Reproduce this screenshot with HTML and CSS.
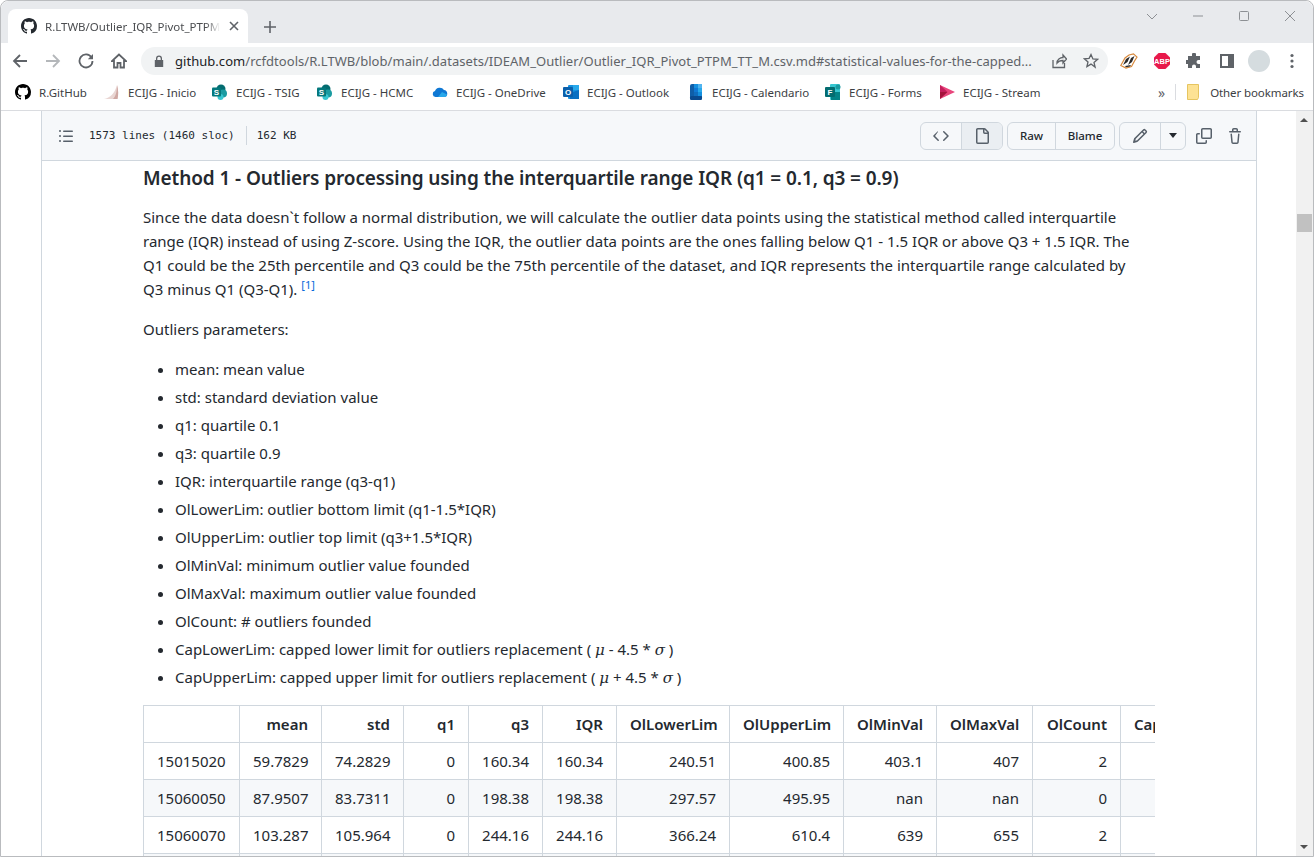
FILE: index.html
```html
<!DOCTYPE html>
<html>
<head>
<meta charset="UTF-8">
<title>R.LTWB/Outlier_IQR_Pivot_PTPM_TT_M.csv.md</title>
<link rel="stylesheet" href="styles.css">
</head>
<body>
<svg class="defs" width="0" height="0">
	<symbol id="gh" viewBox="0 0 16 16"><path d="M8 0C3.58 0 0 3.58 0 8c0 3.54 2.29 6.53 5.47 7.59.4.07.55-.17.55-.38 0-.19-.01-.82-.01-1.49-2.01.37-2.53-.49-2.69-.94-.09-.23-.48-.94-.82-1.13-.28-.15-.68-.52-.01-.53.63-.01 1.08.58 1.23.82.72 1.21 1.87.87 2.33.66.07-.52.28-.87.51-1.07-1.78-.2-3.64-.89-3.64-3.95 0-.87.31-1.59.82-2.15-.08-.2-.36-1.02.08-2.12 0 0 .67-.21 2.2.82.64-.18 1.32-.27 2-.27.68 0 1.36.09 2 .27 1.53-1.04 2.2-.82 2.2-.82.44 1.1.16 1.92.08 2.12.51.56.82 1.27.82 2.15 0 3.07-1.87 3.75-3.65 3.95.29.25.54.73.54 1.48 0 1.07-.01 1.93-.01 2.2 0 .21.15.46.55.38A8.013 8.013 0 0016 8c0-4.42-3.58-8-8-8z"/></symbol>
	<symbol id="sp" viewBox="0 0 16 16"><circle cx="9" cy="5" r="4.5" fill="#036c70"/><circle cx="11" cy="9.5" r="4" fill="#1a9ba1"/><circle cx="8.5" cy="13" r="3" fill="#37c6d0"/><rect x="0" y="3.5" width="9" height="9" rx="1" fill="#03787c"/><text x="4.5" y="10.8" class="fav-letter">S</text></symbol>
</svg>

<!-- окно браузера -->
<div class="tabstrip">
	<div class="tab">
		<svg class="tab-icon" width="16" height="16"><use href="#gh"/></svg>
		<span class="tab-title">R.LTWB/Outlier_IQR_Pivot_PTPM_TT_M.csv.md</span>
		<svg class="tab-close" width="10" height="10" viewBox="0 0 10 10"><path d="M1 1l8 8M9 1l-8 8"/></svg>
	</div>
	<svg class="new-tab" width="12" height="12" viewBox="0 0 12 12"><path d="M6 0v12M0 6h12"/></svg>
	<div class="win-controls">
		<svg width="12" height="12" viewBox="0 0 12 12"><path d="M1 4l5 5 5-5"/></svg>
		<svg width="12" height="12" viewBox="0 0 12 12"><path d="M1 6h10"/></svg>
		<svg width="12" height="12" viewBox="0 0 12 12"><rect x="1.500" y="1.500" width="9" height="9" rx="1"/></svg>
		<svg width="12" height="12" viewBox="0 0 12 12"><path d="M1 1l10 10M11 1L1 11"/></svg>
	</div>
</div>

<div class="toolbar">
	<svg class="nav-btn" width="16" height="16" viewBox="0 0 16 16"><path d="M15 8H2M8 2L2 8l6 6"/></svg>
	<svg class="nav-btn nav-off" width="16" height="16" viewBox="0 0 16 16"><path d="M1 8h13M8 2l6 6-6 6"/></svg>
	<svg class="nav-btn" width="16" height="16" viewBox="0 0 16 16"><path d="M13.500 4.500A6.500 6.500 0 1 0 14.500 8"/><path class="solid" d="M15 1v5.200H9.800z"/></svg>
	<svg class="nav-btn" width="16" height="16" viewBox="0 0 16 16"><path d="M8 1.500L1 8h2v6.500h3.500V10h3v4.500H13V8h2z"/></svg>
	<div class="omnibox">
		<svg class="lock" width="10" height="12" viewBox="0 0 10 12"><path d="M2 5V3.500a3 3 0 0 1 6 0V5h1.200v7H.8V5zm1.300 0h3.400V3.500a1.700 1.700 0 0 0-3.400 0z"/></svg>
		<span class="url"><b>github.com</b>/rcfdtools/R.LTWB/blob/main/.datasets/IDEAM_Outlier/Outlier_IQR_Pivot_PTPM_TT_M.csv.md#statistical-values-for-the-capped...</span>
		<svg class="omni-icon" width="16" height="16" viewBox="0 0 16 16"><path d="M2 7v7.500h11.500V10M6 10c0-3.500 3-5.500 6-5.500V2l3.500 4-3.500 4V7.500C9.500 7.500 7.500 8 6 10z"/></svg>
		<svg class="omni-icon" width="16" height="16" viewBox="0 0 16 16"><path d="M8 1.500l1.900 4.400 4.700.4-3.600 3.100 1.100 4.700L8 11.100l-4.100 2.500L5 8.900 1.400 5.800l4.700-.4z"/></svg>
	</div>
	<div class="ext-icons">
		<svg width="18" height="16" viewBox="0 0 18 16"><path d="M.8 12.500L5 5l4-3 4.500-1.200L17 4l-2.500 4-3 5.500-5.500 1.500z" fill="#fff" stroke="#d98a3d" stroke-width="1.200"/><path d="M3 12l3-6 4-2.500-2.500 5.500zM8 12l3-7 3.500-2-2.500 6zM5 13l6-1-1 1.500-4 .8z" fill="#2b2b2b"/></svg>
		<svg width="16" height="16" viewBox="0 0 16 16"><path d="M4.800 0h6.400L16 4.800v6.400L11.200 16H4.800L0 11.200V4.800z" fill="#e8194b" stroke="#e8194b" stroke-width=".6" stroke-linejoin="round"/><text x="8" y="10.800" class="abp-text">ABP</text></svg>
		<svg width="16" height="16" viewBox="0 0 16 16"><path fill="#5f6368" d="M6 1.500a2 2 0 0 1 4 0V3h4v4h-1.500a2 2 0 0 0 0 4H14v4h-4v-1.500a2 2 0 0 0-4 0V15H2v-4H.5a2 2 0 0 1 0-4H2V3h4z"/></svg>
		<svg width="14" height="14" viewBox="0 0 14 14"><path fill="#5f6368" d="M0 0h14v14H0zm2 2v10h6V2z"/></svg>
		<span class="avatar"></span>
		<svg width="4" height="16" viewBox="0 0 4 16"><circle cx="2" cy="2.500" r="1.600" fill="#5f6368"/><circle cx="2" cy="8" r="1.600" fill="#5f6368"/><circle cx="2" cy="13.500" r="1.600" fill="#5f6368"/></svg>
	</div>
</div>

<div class="bookmarks">
	<div class="bm-list">
		<a class="bm"><svg width="16" height="16"><use href="#gh"/></svg>R.GitHub</a>
		<a class="bm"><svg width="16" height="16" viewBox="0 0 16 16"><path d="M0 15C6 14 11 9 13 1c1.500 5 1.500 10 .5 14z" fill="#e9d6d3"/><path d="M9 15c3-3 4-8 4-14 1.500 5 1.500 10 .5 14z" fill="#cfa8a3"/></svg>ECIJG - Inicio</a>
		<a class="bm"><svg width="16" height="16"><use href="#sp"/></svg>ECIJG - TSIG</a>
		<a class="bm"><svg width="16" height="16"><use href="#sp"/></svg>ECIJG - HCMC</a>
		<a class="bm"><svg width="16" height="16" viewBox="0 0 16 16"><path d="M3.500 13A3 3 0 0 1 3 7.100 5 5 0 0 1 12 6a3.600 3.600 0 0 1 .8 7z" fill="#0f78d4"/><path d="M6 13l4-5 5 2.500a2.600 2.600 0 0 1-2.200 2.500z" fill="#28a8ea"/></svg>ECIJG - OneDrive</a>
		<a class="bm"><svg width="16" height="16" viewBox="0 0 16 16"><rect x="5" y="1" width="11" height="14" rx="1" fill="#1490df"/><rect x="10" y="1" width="6" height="5" fill="#28a8ea"/><path d="M7 9l9-3v9H7z" fill="#0a6fc2"/><rect x="0" y="3" width="10" height="10" rx="1" fill="#0a5fab"/><text x="5" y="11" class="fav-letter">O</text></svg>ECIJG - Outlook</a>
		<a class="bm"><svg width="16" height="16" viewBox="0 0 16 16"><rect x="2" y="0" width="12" height="16" rx="2" fill="#0f5ea8"/><rect x="6" y="0" width="4" height="4" fill="#1490df"/><rect x="10" y="0" width="4" height="4" fill="#50b4f0"/><rect x="6" y="4" width="4" height="4" fill="#0f78d4"/><rect x="10" y="4" width="4" height="4" fill="#28a8ea"/><rect x="6" y="8" width="4" height="4" fill="#0f6cbd"/><rect x="10" y="8" width="4" height="4" fill="#1490df"/><rect x="2" y="12" width="12" height="4" rx="1.500" fill="#0a4a8f"/></svg>ECIJG - Calendario</a>
		<a class="bm"><svg width="16" height="16" viewBox="0 0 16 16"><rect x="5" y="0" width="10" height="16" rx="1" fill="#37c6d0"/><circle cx="13" cy="3" r="2.500" fill="#1a9ba1"/><rect x="6" y="8" width="9" height="8" fill="#038387"/><rect x="0" y="3" width="10" height="10" rx="1" fill="#036c70"/><text x="5" y="11" class="fav-letter">F</text></svg>ECIJG - Forms</a>
		<a class="bm"><svg width="16" height="16" viewBox="0 0 16 16"><path d="M1 1l15 7-15 7z" fill="#e8467c"/><path d="M1 8h7.500L1 15z" fill="#a4133c"/><path d="M1 1l7.500 7H1z" fill="#c41e5c"/></svg>ECIJG - Stream</a>
	</div>
	<span class="bm-more">»</span>
	<span class="bm-sep"></span>
	<svg class="bm-folder" width="14" height="16" viewBox="0 0 14 16"><path d="M.5 .5h11v13l-1 2H.5z" fill="#fde293" stroke="#e6c560"/></svg>
	<span class="bm-other">Other bookmarks</span>
</div>

<!-- страница -->
<div class="viewport">
	<div class="page">
		<div class="blob">
			<div class="blob-head">
				<svg class="octicon list-icon" width="16" height="16" viewBox="0 0 16 16"><path d="M5.750 2.500h8.500a.75.75 0 0 1 0 1.500h-8.500a.75.75 0 0 1 0-1.500zm0 5h8.500a.75.75 0 0 1 0 1.500h-8.500a.75.75 0 0 1 0-1.500zm0 5h8.500a.75.75 0 0 1 0 1.500h-8.500a.75.75 0 0 1 0-1.500zM2 4a1 1 0 1 1 0-2 1 1 0 0 1 0 2zm0 5a1 1 0 1 1 0-2 1 1 0 0 1 0 2zm0 5a1 1 0 1 1 0-2 1 1 0 0 1 0 2z"/></svg>
				<span class="file-info">1573 lines (1460 sloc)</span>
				<span class="file-info file-size">162 KB</span>
				<div class="head-actions">
					<div class="btn-group">
						<span class="btn btn-code"><svg class="octicon" width="16" height="16" viewBox="0 0 16 16"><path d="M11.280 3.220l4.250 4.250a.75.75 0 0 1 0 1.060l-4.250 4.250a.75.75 0 0 1-1.060-1.060L13.940 8l-3.720-3.720a.75.75 0 0 1 1.060-1.060zm-6.560 0a.75.75 0 0 1 0 1.060L2.060 8l3.660 3.720a.75.75 0 0 1-1.060 1.060L.41 8.530a.75.75 0 0 1 0-1.060l4.310-4.250a.75.75 0 0 1 0 0z"/></svg></span>
						<span class="btn btn-file"><svg class="octicon" width="16" height="16" viewBox="0 0 16 16"><path d="M2 1.750C2 .784 2.784 0 3.750 0h6.586c.464 0 .909.184 1.237.513l2.914 2.914c.329.328.513.773.513 1.237v9.586A1.750 1.750 0 0 1 13.250 16h-9.500A1.750 1.750 0 0 1 2 14.250zm1.750-.25a.25.25 0 0 0-.25.25v12.500c0 .138.112.25.25.25h9.500a.25.25 0 0 0 .25-.25V6h-2.750A1.750 1.750 0 0 1 9 4.250V1.500zm6.750.062V4.250c0 .138.112.25.25.25h2.688z"/></svg></span>
					</div>
					<div class="btn-group">
						<span class="btn btn-raw">Raw</span>
						<span class="btn btn-blame">Blame</span>
					</div>
					<div class="btn-group">
						<span class="btn btn-edit"><svg class="octicon" width="16" height="16" viewBox="0 0 16 16"><path d="M11.013 1.427a1.750 1.750 0 0 1 2.474 0l1.086 1.086a1.750 1.750 0 0 1 0 2.474l-8.610 8.610c-.21.210-.470.364-.756.445l-3.251.930a.75.75 0 0 1-.927-.928l.929-3.250c.081-.286.235-.547.445-.758zM12.427 2.487a.25.25 0 0 0-.354 0L11.060 3.500 12.500 4.940l1.013-1.013a.25.25 0 0 0 0-.354zM11.440 6 10 4.560l-6.110 6.110a.25.25 0 0 0-.064.108l-.558 1.953 1.953-.558a.25.25 0 0 0 .108-.064z"/></svg></span>
						<span class="btn btn-caret"><svg width="8" height="5" viewBox="0 0 8 5"><path class="caret" d="M0 0h8L4 5z"/></svg></span>
					</div>
					<svg class="octicon tool-icon" width="16" height="16" viewBox="0 0 16 16"><path d="M0 6.750C0 5.784.784 5 1.750 5h1.500a.75.75 0 0 1 0 1.500h-1.500a.25.25 0 0 0-.25.25v7.500c0 .138.112.25.25.25h7.500a.25.25 0 0 0 .25-.25v-1.500a.75.75 0 0 1 1.500 0v1.500A1.750 1.750 0 0 1 9.250 16h-7.500A1.750 1.750 0 0 1 0 14.250z"/><path d="M5 1.750C5 .784 5.784 0 6.750 0h7.500C15.216 0 16 .784 16 1.750v7.500A1.750 1.750 0 0 1 14.250 11h-7.500A1.750 1.750 0 0 1 5 9.250zm1.750-.25a.25.25 0 0 0-.25.25v7.500c0 .138.112.25.25.25h7.500a.25.25 0 0 0 .25-.25v-7.500a.25.25 0 0 0-.25-.25z"/></svg>
					<svg class="octicon tool-icon" width="16" height="16" viewBox="0 0 16 16"><path d="M11 1.750V3h2.250a.75.75 0 0 1 0 1.500H2.750a.75.75 0 0 1 0-1.500H5V1.750C5 .784 5.784 0 6.750 0h2.500C10.216 0 11 .784 11 1.750zM6.500 1.750V3h3V1.750a.25.25 0 0 0-.25-.25h-2.500a.25.25 0 0 0-.25.25zM4.997 6.178a.75.75 0 1 0-1.493.144L4.300 14.550A1.750 1.750 0 0 0 6.040 16h3.920a1.750 1.750 0 0 0 1.740-1.450l.797-8.228a.75.75 0 0 0-1.493-.144l-.796 8.228a.25.25 0 0 1-.248.094H6.040a.25.25 0 0 1-.248-.094z"/></svg>
				</div>
			</div>

			<div class="markdown">
				<h3>Method 1 - Outliers processing using the interquartile range IQR (q1 = 0.1, q3 = 0.9)</h3>
				<p class="intro">Since the data doesn`t follow a normal distribution, we will calculate the outlier data points using the statistical method called interquartile range (IQR) instead of using Z-score. Using the IQR, the outlier data points are the ones falling below Q1 - 1.5 IQR or above Q3 + 1.5 IQR. The Q1 could be the 25th percentile and Q3 could be the 75th percentile of the dataset, and IQR represents the interquartile range calculated by Q3 minus Q1 (Q3-Q1). <sup><a>[1]</a></sup></p>
				<p>Outliers parameters:</p>
				<ul>
					<li>mean: mean value</li>
					<li>std: standard deviation value</li>
					<li>q1: quartile 0.1</li>
					<li>q3: quartile 0.9</li>
					<li>IQR: interquartile range (q3-q1)</li>
					<li>OlLowerLim: outlier bottom limit (q1-1.5*IQR)</li>
					<li>OlUpperLim: outlier top limit (q3+1.5*IQR)</li>
					<li>OlMinVal: minimum outlier value founded</li>
					<li>OlMaxVal: maximum outlier value founded</li>
					<li>OlCount: # outliers founded</li>
					<li>CapLowerLim: capped lower limit for outliers replacement ( <i class="math">μ</i> - 4.5 * <i class="math">σ</i> )</li>
					<li>CapUpperLim: capped upper limit for outliers replacement ( <i class="math">μ</i> + 4.5 * <i class="math">σ</i> )</li>
				</ul>
				<div class="table-wrap">
					<table>
						<tr><th></th><th>mean</th><th>std</th><th>q1</th><th>q3</th><th>IQR</th><th>OlLowerLim</th><th>OlUpperLim</th><th>OlMinVal</th><th>OlMaxVal</th><th>OlCount</th><th>CapLowerLim</th></tr>
						<tr><td>15015020</td><td>59.7829</td><td>74.2829</td><td>0</td><td>160.34</td><td>160.34</td><td>240.51</td><td>400.85</td><td>403.1</td><td>407</td><td>2</td><td></td></tr>
						<tr><td>15060050</td><td>87.9507</td><td>83.7311</td><td>0</td><td>198.38</td><td>198.38</td><td>297.57</td><td>495.95</td><td>nan</td><td>nan</td><td>0</td><td></td></tr>
						<tr><td>15060070</td><td>103.287</td><td>105.964</td><td>0</td><td>244.16</td><td>244.16</td><td>366.24</td><td>610.4</td><td>639</td><td>655</td><td>2</td><td></td></tr>
						<tr><td></td><td></td><td></td><td></td><td></td><td></td><td></td><td></td><td></td><td></td><td></td><td></td></tr>
					</table>
				</div>
			</div>
		</div>
	</div>
	<div class="scrollbar">
		<span class="scroll-up"></span>
		<span class="scroll-thumb"></span>
		<span class="scroll-down"></span>
	</div>
</div>
</body>
</html>
```

FILE: styles.css
```css
* {
  box-sizing: border-box;
}

html, body {
  margin: 0;
  height: 857px;
  overflow: hidden;
}

body {
  font-family: "Noto Sans", sans-serif;
  color: #24292f;
  background-color: #fff;
  border: 1px solid #b9bbbe;
  border-top-left-radius: 8px;
  border-top-right-radius: 8px;
}

.defs {
  position: absolute;
}

.fav-letter {
  font: bold 8px "Liberation Sans", sans-serif;
  fill: #fff;
  text-anchor: middle;
}

/* вкладки */
.tabstrip {
  display: flex;
  align-items: flex-end;
  height: 42px;
  padding-left: 7px;
  background-color: #e8eaed;
  border-top-left-radius: 8px;
  border-top-right-radius: 8px;
}

.tab {
  display: flex;
  align-items: center;
  width: 240px;
  height: 34px;
  padding: 0 9px 0 13px;
  background-color: #fff;
  border-radius: 8px 8px 0 0;
}

.tab-icon {
  flex: none;
  fill: #24292f;
}

.tab-title {
  flex: 1;
  margin-left: 8px;
  overflow: hidden;
  white-space: nowrap;
  font-size: 11.500px;
  color: #4b4d50;
  -webkit-mask-image: linear-gradient(to right, #000 92%, transparent);
  mask-image: linear-gradient(to right, #000 92%, transparent);
}

.tab-close {
  flex: none;
  margin-left: 9px;
  fill: none;
  stroke: #5f6368;
  stroke-width: 1.600;
}

.new-tab {
  align-self: center;
  margin: 9px 0 0 16px;
  fill: none;
  stroke: #5f6368;
  stroke-width: 1.600;
}

.win-controls {
  display: flex;
  gap: 34px;
  align-self: flex-start;
  margin: 9px 17px 0 auto;
}

.win-controls svg {
  fill: none;
  stroke: #8d9094;
  stroke-width: 1;
}

/* панель адреса */
.toolbar {
  display: flex;
  align-items: center;
  height: 36px;
  padding-left: 11px;
  background-color: #fff;
}

.nav-btn {
  flex: none;
  margin-right: 17px;
  fill: none;
  stroke: #5f6368;
  stroke-width: 1.800;
}

.nav-off {
  stroke: #b4b7ba;
}

.solid {
  fill: #5f6368;
  stroke: none;
}

.omnibox {
  display: flex;
  align-items: center;
  width: 967px;
  height: 28px;
  margin-left: -3px;
  padding: 0 9px 0 13px;
  background-color: #f1f3f4;
  border-radius: 14px;
  flex: none;
}

.lock {
  flex: none;
  fill: #5f6368;
}

.url {
  flex: 1;
  margin-left: 11px;
  font-size: 13px;
  letter-spacing: 0.04px;
  white-space: nowrap;
  overflow: hidden;
  color: #5f6368;
}

.url b {
  font-weight: 400;
  color: #202124;
}

.omni-icon {
  flex: none;
  margin-left: 16px;
  fill: none;
  stroke: #5f6368;
  stroke-width: 1.300;
}

.ext-icons {
  display: grid;
  grid-template-columns: repeat(6, 32.500px);
  justify-items: center;
  align-items: center;
  margin-left: 5px;
}

.abp-text {
  font: bold 7.500px "Liberation Sans", sans-serif;
  fill: #fff;
  text-anchor: middle;
}

.avatar {
  width: 22px;
  height: 22px;
  border-radius: 50%;
  background-color: #d5dcdf;
}

/* закладки */
.bookmarks {
  display: flex;
  align-items: center;
  height: 32px;
  padding: 0 0 5px 14px;
  background-color: #fff;
  border-bottom: 1px solid #dadce0;
  font-size: 11.500px;
  color: #3c4043;
}

.bm-list {
  display: grid;
  grid-template-columns: 89px 108px 105px 115px 131px 125px 137px 114px 100px;
  width: 1140px;
  flex: none;
}

.bm {
  display: flex;
  align-items: center;
  gap: 8px;
  white-space: nowrap;
}

.bm svg {
  flex: none;
}

.bm-more {
  margin-left: 3px;
  font-size: 14px;
  color: #5f6368;
}

.bm-sep {
  width: 1px;
  height: 16px;
  margin-left: 10px;
  background-color: #dadce0;
}

.bm-folder {
  flex: none;
  margin-left: 11px;
}

.bm-other {
  margin-left: 9px;
  letter-spacing: -0.1px;
  white-space: nowrap;
}

/* содержимое страницы */
.viewport {
  display: flex;
  height: 745px;
  overflow: hidden;
}

.page {
  flex: 1;
  padding-left: 40px;
  padding-right: 39px;
  overflow: hidden;
}

.blob {
  height: 100%;
  border-left: 1px solid #d0d7de;
  border-right: 1px solid #d0d7de;
}

.blob-head {
  display: flex;
  align-items: center;
  height: 50px;
  padding-left: 16px;
  background-color: #f6f8fa;
  border-bottom: 1px solid #d0d7de;
}

.octicon {
  fill: #57606a;
  flex: none;
}

.list-icon {
  margin-right: 15px;
}

.file-info {
  font-family: "DejaVu Sans Mono", monospace;
  font-size: 11px;
  color: #24292f;
}

.file-size {
  margin-left: 11px;
  padding-left: 10px;
  border-left: 1px solid #d0d7de;
  line-height: 19px;
}

.head-actions {
  display: flex;
  align-items: center;
  margin-left: auto;
  margin-right: 13px;
}

.btn-group {
  display: flex;
  height: 28px;
  margin-right: 4px;
  border: 1px solid #d0d7de;
  border-radius: 6px;
  background-color: #f6f8fa;
  overflow: hidden;
}

.btn {
  display: flex;
  align-items: center;
  justify-content: center;
  font-size: 11.500px;
  font-weight: 500;
  border-right: 1px solid #d0d7de;
}

.btn:last-child {
  border-right: none;
}

.btn-code {
  width: 41px;
}

.btn-file {
  width: 40px;
  background-color: #eaeef2;
}

.btn-raw {
  width: 48px;
}

.btn-blame {
  width: 58px;
}

.btn-edit {
  width: 41px;
}

.btn-caret {
  width: 24px;
}

.caret {
  fill: #24292f;
}

.tool-icon {
  margin-left: 6px;
}

.tool-icon + .tool-icon {
  margin-left: 15px;
}

.markdown {
  padding: 0 101px 0 101px;
  font-size: 15px;
  line-height: 24px;
}

h3 {
  margin: 0;
  padding-top: 5px;
  font-size: 19px;
  letter-spacing: -0.1px;
  font-weight: 600;
  line-height: 25px;
}

p {
  margin: 14px 0 16px;
}

.intro {
  max-width: 1005px;
}

p a {
  color: #0969da;
}

sup {
  font-size: 11px;
  line-height: 0;
}

ul {
  margin: 0 0 16px;
  padding-left: 32px;
}

li {
  margin-top: 4px;
}

.math {
  font-family: "DejaVu Serif", serif;
  font-size: 15px;
  line-height: 0;
}

.table-wrap {
  overflow: hidden;
  margin-top: 15px;
}

table {
  border-collapse: collapse;
  table-layout: fixed;
  width: 1106px;
}

th, td {
  height: 37px;
  padding: 0 13px;
  border: 1px solid #d0d7de;
  text-align: right;
  white-space: nowrap;
  overflow: hidden;
}

th {
  font-weight: 600;
}

tr:nth-child(odd) td {
  background-color: #f6f8fa;
}

th:nth-child(1) { width: 96px; }
th:nth-child(2) { width: 82px; }
th:nth-child(3) { width: 82px; }
th:nth-child(4) { width: 65px; }
th:nth-child(5) { width: 74px; }
th:nth-child(6) { width: 74px; }
th:nth-child(7) { width: 113px; }
th:nth-child(8) { width: 114px; }
th:nth-child(9) { width: 93px; }
th:nth-child(10) { width: 96px; }
th:nth-child(11) { width: 88px; }
th:nth-child(12) { width: 129px; text-align: left; }

td:nth-child(1) {
  text-align: left;
}

/* полоса прокрутки */
.scrollbar {
  position: relative;
  flex: none;
  width: 17px;
  background-color: #f1f1f1;
}

.scroll-up, .scroll-down {
  position: absolute;
  left: 4px;
  border-left: 4px solid transparent;
  border-right: 4px solid transparent;
}

.scroll-up {
  top: 7px;
  border-bottom: 4px solid #505050;
}

.scroll-down {
  bottom: 7px;
  border-top: 4px solid #505050;
}

.scroll-thumb {
  position: absolute;
  top: 103px;
  left: 1px;
  width: 15px;
  height: 18px;
  background-color: #c1c1c1;
}
```
